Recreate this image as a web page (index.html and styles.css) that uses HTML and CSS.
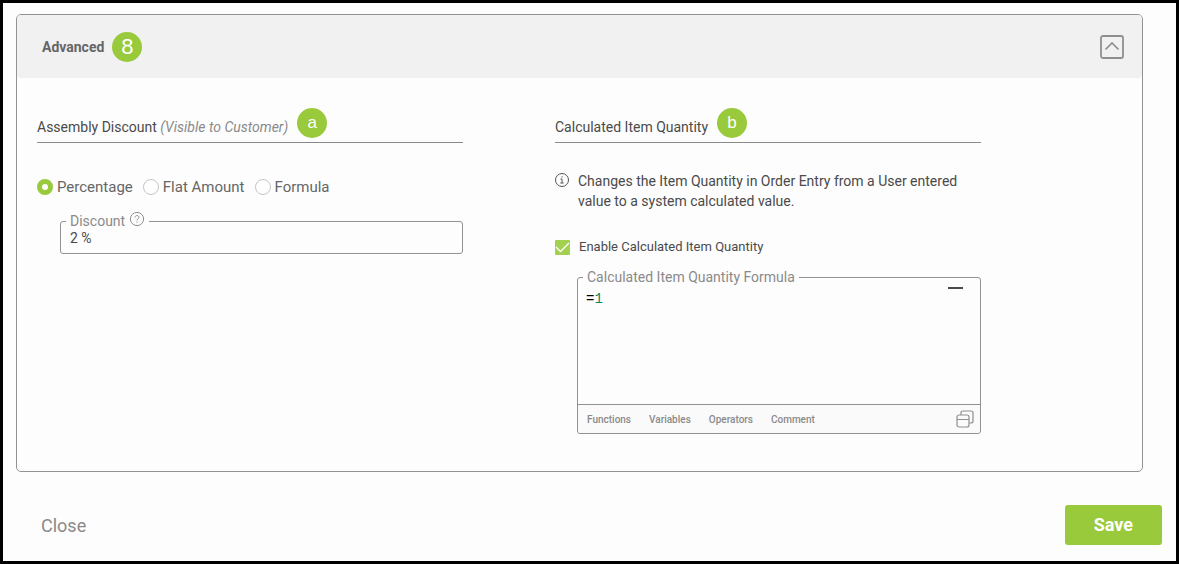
FILE: index.html
```html
<!DOCTYPE html>
<html lang="en">
<head>
    <meta charset="UTF-8">
    <meta name="viewport" content="width=device-width, initial-scale=1.0">
    <title>Advanced</title>
    <link rel="stylesheet" href="styles.css">
</head>
<body>
    <main class="page">
        <section class="card">
            <header class="card-header">
                <h2 class="card-title">Advanced</h2>
                <span class="badge badge-number">8</span>
                <button class="collapse-btn" type="button" aria-label="Collapse">
                    <svg width="24" height="24" viewBox="0 0 24 24" fill="none" stroke="#8f8f8f">
                        <rect x="1" y="1" width="22" height="22" rx="2" stroke-width="1.8"/>
                        <path d="M5.5 14.5 12 8l6.5 6.5" stroke-width="1.7"/>
                    </svg>
                </button>
            </header>
            <div class="card-body">
                <div class="column">
                    <div class="column-heading">
                        <h3>Assembly Discount <em>(Visible to Customer)</em></h3>
                        <span class="badge">a</span>
                    </div>
                    <div class="radios">
                        <label><input type="radio" name="discount-type" checked>Percentage</label>
                        <label><input type="radio" name="discount-type">Flat Amount</label>
                        <label><input type="radio" name="discount-type">Formula</label>
                    </div>
                    <fieldset class="field discount-field">
                        <legend>
                            <label for="discount">Discount</label>
                            <svg width="16" height="16" viewBox="0 0 16 16" fill="none" stroke="#8f8f8f">
                                <circle cx="8" cy="7" r="6.6"/>
                                <path d="M6 5.5c0-2.600 4-2.600 4-.2 0 1.400-2 1.400-2 3M8 9.500v1.200"/>
                            </svg>
                        </legend>
                        <input id="discount" type="text" value="2 %">
                    </fieldset>
                </div>

                <div class="column">
                    <div class="column-heading">
                        <h3>Calculated Item Quantity</h3>
                        <span class="badge">b</span>
                    </div>
                    <div class="info">
                        <svg width="15" height="15" viewBox="0 0 15 15" fill="none" stroke="#555">
                            <circle cx="7" cy="7" r="6.5"/>
                            <path d="M5.500 6H7v4M5.300 10h3.400M7 3.300v1.200"/>
                        </svg>
                        <p>Changes the Item Quantity in Order Entry from a User entered value to a system calculated value.</p>
                    </div>
                    <label class="enable">
                        <input type="checkbox" checked>
                        Enable Calculated Item Quantity
                    </label>
                    <fieldset class="field formula-field">
                        <legend id="formula-label">Calculated Item Quantity Formula</legend>
                        <div class="editor">
                            <div class="code" contenteditable="true" spellcheck="false" role="textbox" aria-multiline="true" aria-labelledby="formula-label">=<span class="number">1</span></div>
                            <button class="minimize-btn" type="button" aria-label="Minimize"></button>
                        </div>
                        <div class="toolbar">
                            <button type="button">Functions</button>
                            <button type="button">Variables</button>
                            <button type="button">Operators</button>
                            <button type="button">Comment</button>
                            <button class="popout-btn" type="button" aria-label="Open in window">
                                <svg width="18" height="18" viewBox="0 0 18 18" fill="none" stroke="#8f8f8f" stroke-width="1.2">
                                    <rect x="1" y="5" width="12" height="12" rx="2"/>
                                    <path d="M1 9.500h12M5 5V3q0-2 2-2h8q2 0 2 2v8q0 2-2 2h-2"/>
                                </svg>
                            </button>
                        </div>
                    </fieldset>
                </div>
            </div>
        </section>

        <footer class="actions">
            <button class="close-btn" type="button">Close</button>
            <button class="save-btn" type="button">Save</button>
        </footer>
    </main>
</body>
</html>
```
FILE: styles.css
```css
* {
    box-sizing: border-box;
    margin: 0;
    padding: 0;
}

body {
    font-family: Roboto, sans-serif;
    font-size: 14px;
    line-height: 20px;
    color: #4a4a4a;
    background-color: #fdfdfd;
}

button {
    border: 0;
    background: none;
    font-family: inherit;
    color: #8a8a8a;
    cursor: pointer;
}

svg {
    display: block;
    flex: none;
}

.page {
    min-height: 100vh;
    padding: 11px 14px 16px 13px;
    border: 3px solid #000;
}

.card {
    margin-right: 19px;
    border: 1px solid #929292;
    border-radius: 5px;
}

.card-header {
    display: flex;
    align-items: center;
    height: 63px;
    padding: 0 18px 0 25px;
    border-radius: 4px;
    background-color: #f1f1f1;
}

.card-title {
    margin-right: 8px;
    font-size: 14px;
    font-weight: 700;
    color: #666;
}

.badge {
    display: flex;
    justify-content: center;
    align-items: center;
    width: 30px;
    height: 30px;
    border-radius: 50%;
    background-color: #99ca3c;
    font-family: "Liberation Sans", sans-serif;
    font-size: 17px;
    color: #fff;
}

.badge-number {
    font-size: 22px;
}

.collapse-btn {
    margin-left: auto;
}

.card-body {
    display: grid;
    grid-template-columns: repeat(2, minmax(0, 1fr));
    gap: 92px;
    padding: 30px 161px 37px 20px;
}

.column-heading {
    display: flex;
    align-items: flex-end;
    gap: 9px;
    padding-bottom: 4px;
    border-bottom: 1px solid #8a8a8a;
}

.column-heading h3 {
    font-size: 14px;
    font-weight: 400;
    line-height: 22px;
}

.column-heading em {
    color: #8a8a8a;
}

.radios {
    display: flex;
    gap: 10px;
    margin-top: 34px;
    font-size: 15px;
    color: #666;
}

.radios label {
    display: flex;
    align-items: center;
    gap: 4px;
}

.radios input {
    appearance: none;
    width: 16px;
    height: 16px;
    border: 1px solid #c4c4c4;
    border-radius: 50%;
    background-color: #fff;
}

.radios input:checked {
    border: 5px solid #99ca3c;
}

.field {
    min-width: 0;
    margin-left: 22px;
    border: 1px solid #929292;
    border-radius: 3px;
}

.field legend {
    display: flex;
    gap: 4px;
    margin-left: 5px;
    padding: 0 4px;
    line-height: 18px;
    color: #8a8a8a;
}

.discount-field {
    margin-top: 15px;
    margin-left: 23px;
}

.discount-field input {
    display: block;
    width: 100%;
    height: 16px;
    margin-bottom: 7px;
    padding: 0 9px;
    border: 0;
    outline: 0;
    background: none;
    font-family: inherit;
    font-size: 14px;
    color: #4a4a4a;
}

.info {
    display: flex;
    gap: 8px;
    margin-top: 28px;
}

.info svg {
    margin-top: 2px;
}

.enable {
    display: flex;
    align-items: center;
    gap: 9px;
    margin-top: 26px;
    font-size: 13px;
}

.enable input {
    appearance: none;
    width: 15px;
    height: 15px;
    border-radius: 1px;
    background-color: #a3d04e;
}

.enable input:checked {
    background-image: url("data:image/svg+xml,%3Csvg xmlns='http://www.w3.org/2000/svg' viewBox='0 0 15 15'%3E%3Cpath d='M1 7 5.500 11.500 14 3' fill='none' stroke='white' stroke-width='1.300'/%3E%3C/svg%3E");
}

.formula-field {
    margin-top: 11px;
}

.editor {
    display: flex;
    align-items: flex-start;
    height: 118px;
}

.code {
    flex: 1;
    height: 100%;
    padding: 3px 8px;
    outline: 0;
    font-family: "Liberation Mono", monospace;
    color: #000;
}

.number {
    color: #098658;
}

.minimize-btn {
    width: 15px;
    height: 2px;
    margin: 1px 17px 0 0;
    background-color: #4a4a4a;
}

.toolbar {
    display: flex;
    align-items: center;
    gap: 18px;
    height: 29px;
    padding: 0 6px 0 9px;
    border-top: 1px solid #929292;
    border-radius: 0 0 3px 3px;
    background-color: #fafafa;
}

.toolbar button {
    font-size: 10px;
    font-weight: 500;
}

.toolbar .popout-btn {
    margin-left: auto;
}

.actions {
    display: flex;
    justify-content: space-between;
    align-items: center;
    margin-top: 33px;
    padding-left: 25px;
}

.close-btn {
    font-size: 18px;
}

.save-btn {
    padding: 10px 29px;
    border-radius: 3px;
    background-color: #99ca3c;
    font-size: 18px;
    font-weight: 700;
    line-height: 20px;
    color: #fff;
}
```
